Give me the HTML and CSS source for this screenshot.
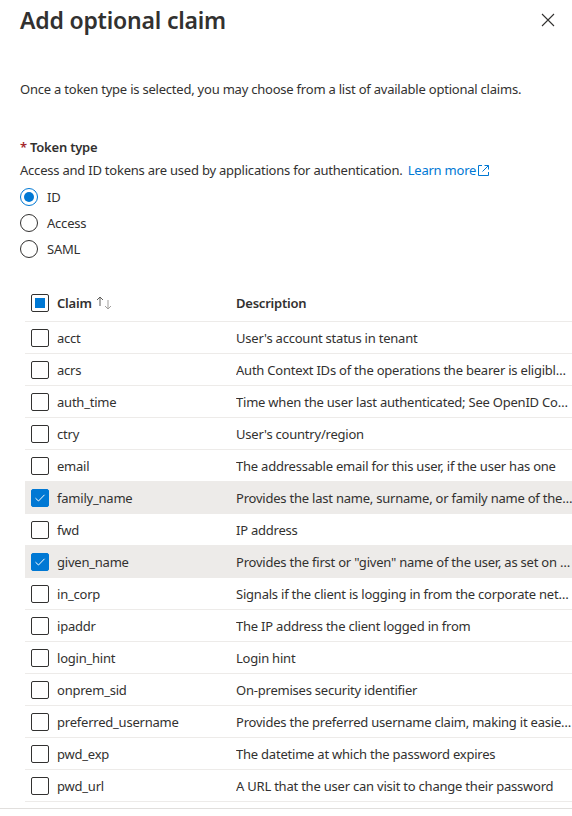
FILE: index.html
```html
<!DOCTYPE html>
<html>
<head>
<meta charset="utf-8">
<link rel="stylesheet" href="styles.css">
</head>
<body>
<div class="panel">
  <main class="main">
    <div class="head">
      <h1 class="title">Add optional claim</h1>
      <button class="close" aria-label="Close">
        <svg width="14" height="14" viewBox="0 0 14 14"><path d="M1 1L13 13M13 1L1 13" stroke="#323130" stroke-width="1.1" fill="none"/></svg>
      </button>
    </div>
    <p class="intro">Once a token type is selected, you may choose from a list of available optional claims.</p>
    <div class="label"><span class="req">*</span> Token type</div>
    <p class="help">Access and ID tokens are used by applications for authentication. <a class="link" href="#">Learn more<svg class="ext" width="13" height="13" viewBox="0 0 13 13"><path d="M5 1.5H1.5v10h10V8M7.5 1.5h4v4M11.5 1.5L5.5 7.5" stroke="#0078d4" stroke-width="1" fill="none"/></svg></a></p>
    <div class="radios">
      <label class="radio"><span class="dot on"></span>ID</label>
      <label class="radio"><span class="dot"></span>Access</label>
      <label class="radio"><span class="dot"></span>SAML</label>
    </div>
    <div class="table">
      <div class="row hdr">
        <div class="c1"><span class="cb ind"></span>Claim <svg class="sort" width="16" height="14" viewBox="0 0 16 14"><path d="M4 10V1M1 4L4 1L7 4" stroke="#605e5c" stroke-width="1" fill="none"/><path d="M12 4v9M9 10l3 3l3-3" stroke="#a19f9d" stroke-width="1" fill="none"/></svg></div>
        <div class="c2">Description</div>
      </div>
      <div class="row"><div class="c1"><span class="cb"></span>acct</div><div class="c2">User's account status in tenant</div></div>
      <div class="row"><div class="c1"><span class="cb"></span>acrs</div><div class="c2">Auth Context IDs of the operations the bearer is eligible to perform</div></div>
      <div class="row"><div class="c1"><span class="cb"></span>auth_time</div><div class="c2">Time when the user last authenticated; See OpenID Connect spec</div></div>
      <div class="row"><div class="c1"><span class="cb"></span>ctry</div><div class="c2">User's country/region</div></div>
      <div class="row"><div class="c1"><span class="cb"></span>email</div><div class="c2">The addressable email for this user, if the user has one</div></div>
      <div class="row sel"><div class="c1"><span class="cb chk"><svg width="12" height="10" viewBox="0 0 12 10"><path d="M1.5 5.2L4.5 8L10.5 1.8" stroke="#fff" stroke-width="1" fill="none"/></svg></span>family_name</div><div class="c2">Provides the last name, surname, or family name of the user</div></div>
      <div class="row"><div class="c1"><span class="cb"></span>fwd</div><div class="c2">IP address</div></div>
      <div class="row sel"><div class="c1"><span class="cb chk"><svg width="12" height="10" viewBox="0 0 12 10"><path d="M1.5 5.2L4.5 8L10.5 1.8" stroke="#fff" stroke-width="1" fill="none"/></svg></span>given_name</div><div class="c2">Provides the first or "given" name of the user, as set on the user object</div></div>
      <div class="row"><div class="c1"><span class="cb"></span>in_corp</div><div class="c2">Signals if the client is logging in from the corporate network</div></div>
      <div class="row"><div class="c1"><span class="cb"></span>ipaddr</div><div class="c2">The IP address the client logged in from</div></div>
      <div class="row"><div class="c1"><span class="cb"></span>login_hint</div><div class="c2">Login hint</div></div>
      <div class="row"><div class="c1"><span class="cb"></span>onprem_sid</div><div class="c2">On-premises security identifier</div></div>
      <div class="row"><div class="c1"><span class="cb"></span>preferred_username</div><div class="c2">Provides the preferred username claim, making it easier for apps</div></div>
      <div class="row"><div class="c1"><span class="cb"></span>pwd_exp</div><div class="c2">The datetime at which the password expires</div></div>
      <div class="row"><div class="c1"><span class="cb"></span>pwd_url</div><div class="c2">A URL that the user can visit to change their password</div></div>
      <div class="row"><div class="c1"><span class="cb"></span>sid</div><div class="c2">Session ID, used for per-session user sign-out</div></div>
    </div>
  </main>
  <footer class="foot"></footer>
</div>
</body>
</html>
```

FILE: styles.css
```css
html, body {
  margin: 0;
  padding: 0;
  background: #fff;
  overflow: hidden;
}
body {
  font-family: "Segoe UI", "Noto Sans", "Open Sans", sans-serif;
  font-size: 13px;
  letter-spacing: -0.22px;
  color: #323130;
}
.panel {
  width: 572px;
  height: 816px;
  display: flex;
  flex-direction: column;
}
.main {
  flex: 1;
  overflow: hidden;
  padding-left: 20px;
}
.foot {
  height: 7px;
  border-top: 1px solid #e1dfdd;
}
.head {
  display: flex;
  justify-content: space-between;
  align-items: center;
  padding-top: 4px;
  height: 32px;
}
.title {
  margin: 0;
  font-size: 23px;
  font-weight: 600;
  line-height: 32px;
  letter-spacing: -0.2px;
}
.close {
  border: 0;
  background: none;
  padding: 0;
  margin-right: 17px;
  width: 14px;
  height: 14px;
  display: flex;
}
.intro {
  margin: 43px 0 0;
  line-height: 20px;
}
.label {
  margin-top: 38px;
  line-height: 20px;
  font-size: 13px;
  font-weight: 600;
}
.req {
  color: #a4262c;
}
.help {
  margin: 3px 0 0;
  line-height: 20px;
}
.link {
  color: #0078d4;
  text-decoration: none;
  margin-left: 2px;
}
.ext {
  vertical-align: -2px;
  margin-left: 1px;
}
.radios {
  margin-top: 4px;
  display: flex;
  flex-direction: column;
}
.radio {
  height: 26px;
  display: flex;
  align-items: center;
  gap: 9px;
}
.dot {
  width: 18px;
  height: 18px;
  box-sizing: border-box;
  border: 1px solid #323130;
  border-radius: 50%;
  display: flex;
  align-items: center;
  justify-content: center;
}
.dot.on {
  border-color: #0078d4;
}
.dot.on::after {
  content: "";
  width: 10px;
  height: 10px;
  border-radius: 50%;
  background: #0078d4;
}
.table {
  margin-top: 23px;
  margin-left: 5px;
  width: 600px;
}
.row {
  display: flex;
  height: 31px;
  align-items: center;
  border-bottom: 1px solid #edebe9;
}
.row.hdr {
  height: 36px;
  font-weight: 600;
}
.row.sel {
  background: #edebe9;
}
.c1 {
  width: 211px;
  flex: none;
  display: flex;
  align-items: center;
  padding-left: 6px;
  box-sizing: border-box;
  gap: 8px;
}
.c2 {
  width: 337px;
  flex: none;
  white-space: nowrap;
  overflow: hidden;
  text-overflow: ellipsis;
}
.cb {
  width: 18px;
  height: 18px;
  box-sizing: border-box;
  border: 1px solid #323130;
  border-radius: 2px;
  display: flex;
  align-items: center;
  justify-content: center;
  flex: none;
  background: #fff;
}
.cb.ind::after {
  content: "";
  width: 10px;
  height: 10px;
  background: #0078d4;
}
.cb.chk {
  background: #0078d4;
  border-color: #0078d4;
}
.sort {
  margin-left: -4px;
  flex: none;
}
```
